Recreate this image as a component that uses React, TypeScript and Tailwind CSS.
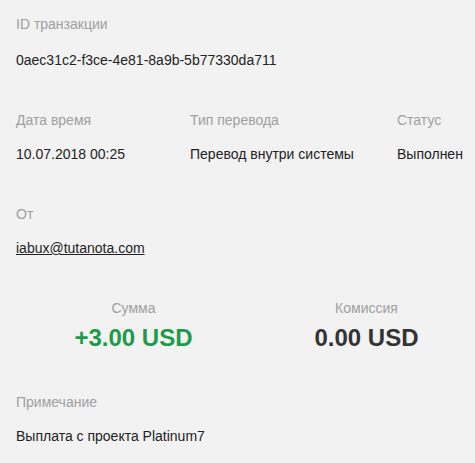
const label = "text-[14px] leading-[20px] text-[#a0a0a0]";
const value = "text-[14px] leading-[20px] text-[#222222]";

export default function App() {
  return (
    <div
      className="w-[475px] h-[463px] overflow-hidden bg-[#f2f2f2] pl-[16px] pt-[14px]"
      style={{ fontFamily: '"Liberation Sans", Arial, sans-serif' }}
    >
      {/* ID */}
      <div>
        <div className={label}>ID транзакции</div>
        <div className={`${value} mt-[16px]`}>0aec31c2-f3ce-4e81-8a9b-5b77330da711</div>
      </div>

      {/* Date / type / status */}
      <div className="flex mt-[40px]">
        <div className="w-[174px] shrink-0">
          <div className={label}>Дата время</div>
          <div className={`${value} mt-[14px]`}>10.07.2018 00:25</div>
        </div>
        <div className="w-[207px] shrink-0">
          <div className={label}>Тип перевода</div>
          <div className={`${value} mt-[14px]`}>Перевод внутри системы</div>
        </div>
        <div className="shrink-0">
          <div className={label}>Статус</div>
          <div className={`${value} mt-[14px]`}>Выполнен</div>
        </div>
      </div>

      {/* From */}
      <div className="mt-[40px]">
        <div className={label}>От</div>
        <div className={`${value} mt-[14px] underline`}>iabux@tutanota.com</div>
      </div>

      {/* Amounts */}
      <div className="flex mt-[40px] -ml-[16px] pl-[17px]">
        <div className="w-[233px] shrink-0 text-center">
          <div className={label}>Сумма</div>
          <div className="mt-[6px] text-[24px] leading-[28px] font-bold text-[#1f9a4a]">+3.00 USD</div>
        </div>
        <div className="w-[233px] shrink-0 text-center">
          <div className={label}>Комиссия</div>
          <div className="mt-[6px] text-[24px] leading-[28px] font-bold text-[#333333]">0.00 USD</div>
        </div>
      </div>

      {/* Note */}
      <div className="mt-[40px]">
        <div className={label}>Примечание</div>
        <div className={`${value} mt-[14px]`}>Выплата с проекта Platinum7</div>
      </div>
    </div>
  );
}
